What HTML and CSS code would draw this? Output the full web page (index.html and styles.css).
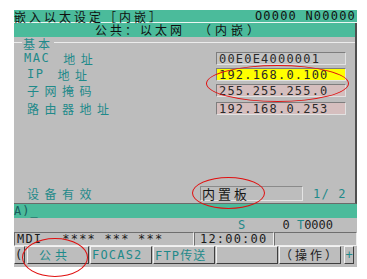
FILE: index.html
```html
<!DOCTYPE html>
<html lang="zh">
<head>
<meta charset="utf-8">
<title>嵌入以太设定</title>
<link rel="stylesheet" href="styles.css">
</head>
<body>
<div class="screen">
  <div class="title">
    <span class="cjk title-text">嵌入以太设定［内嵌］</span>
    <span class="mono">O0000 N00000</span>
  </div>
  <div class="subtitle">
    <span class="cjk sub-a">公共：以太网</span>
    <span class="cjk sub-b">（内嵌）</span>
  </div>
  <div class="panel">
    <div class="legend">
      <span class="legend-line short"></span>
      <span class="cjk legend-text">基本</span>
      <span class="legend-line long"></span>
    </div>
    <div class="rows">
      <div class="row">
        <span class="label label-mac"><span class="mono lat">MAC</span><span class="cjk lab">地址</span></span>
        <span class="value mono">00E0E4000001</span>
      </div>
      <div class="row">
        <span class="label label-ip"><span class="mono lat">IP</span><span class="cjk lab">地址</span></span>
        <span class="value mono yellow">192.168.0.100</span>
      </div>
      <div class="row">
        <span class="label"><span class="cjk lab">子网掩码</span></span>
        <span class="value mono pink">255.255.255.0</span>
      </div>
      <div class="row row-last">
        <span class="label"><span class="cjk lab">路由器地址</span></span>
        <span class="value mono pink">192.168.0.253</span>
      </div>
    </div>
    <div class="device">
      <span class="label"><span class="cjk lab">设备有效</span></span>
      <span class="dev-box cjk">内置板</span>
      <span class="page mono">1/ 2</span>
    </div>
  </div>
  <div class="input mono">A)_</div>
  <div class="srow mono">
    <span class="teal">S</span>
    <span class="st"><span>0</span> <span class="teal">T</span><span>0000</span></span>
  </div>
  <div class="status">
    <div class="cell cell-a mono"><span class="mdi">MDI</span><span>**** *** ***</span></div>
    <div class="cell cell-b mono">12:00:00</div>
    <div class="cell cell-c"></div>
  </div>
  <div class="keys">
    <div class="key key-edge mono">(</div>
    <div class="key key-w cjk key-center teal">公共</div>
    <div class="key key-w mono teal">FOCAS2</div>
    <div class="key key-w teal"><span class="mono">FTP</span><span class="cjk">传送</span></div>
    <div class="key key-w"></div>
    <div class="key key-w cjk key-op">（操作）</div>
    <div class="key key-plus mono teal">+</div>
  </div>
  <div class="mark mark-ip"></div>
  <div class="mark mark-dev"></div>
  <div class="mark mark-key"></div>
</div>
</body>
</html>
```
FILE: styles.css
```css
* { box-sizing: border-box; }
html, body { margin: 0; padding: 0; background: #ffffff; }
body { width: 367px; height: 279px; overflow: hidden; }

.cjk { font-family: "Noto Sans CJK SC", "Noto Sans", sans-serif; font-size: 12px; }
.mono { font-family: "DejaVu Sans Mono", "Liberation Mono", monospace; font-size: 12px; letter-spacing: 1.2px; }
.teal { color: #1f8a8a; }

.screen {
  position: relative;
  margin: 10px 0 0 14px;
  width: 343px;
  background: #bdbdbd;
  padding-bottom: 3px;
}

.title {
  height: 13px;
  background: #4bbb9b;
  display: flex;
  justify-content: space-between;
  align-items: center;
  color: #101010;
  line-height: 13px;
  border-bottom: 1px solid #eaf6f2;
  padding-right: 1px;
}
.title-text { letter-spacing: 3px; }

.subtitle {
  height: 14px;
  background: #4bbb9b;
  display: flex;
  align-items: center;
  line-height: 14px;
  color: #101010;
  padding-left: 81px;
  border-right: 2px solid #4f4f4f;
}
.sub-a { letter-spacing: 3px; }
.sub-b { letter-spacing: 4px; margin-left: 14px; }

.panel {
  height: 167px;
  display: flex;
  flex-direction: column;
  border-right: 2px solid #4f4f4f;
  border-bottom: 1px solid #6a6a6a;
}

.legend {
  display: flex;
  height: 14px;
  margin-top: 1px;
}
.legend-line { height: 1px; background: #ececec; margin-top: 4px; }
.legend-line.short { width: 8px; }
.legend-line.long { flex: 1; }
.legend-text { color: #1f8a8a; line-height: 12px; letter-spacing: 3px; padding: 0 1px; }

.rows { display: flex; flex-direction: column; gap: 3px; }
.row { display: flex; height: 13px; align-items: center; }
.row-last { margin-top: 2px; }

.label {
  width: 202px;
  padding-left: 13px;
  color: #1f8a8a;
  display: flex;
  align-items: center;
  line-height: 13px;
}
.label-mac { padding-left: 10px; }
.lab { letter-spacing: 5.5px; }
.label-mac .lat { letter-spacing: 1.5px; margin-right: 13px; }
.label-ip .lat { letter-spacing: 1.5px; margin-right: 13px; }

.value {
  width: 130px;
  height: 13px;
  line-height: 12px;
  padding-left: 2px;
  color: #2a2a2a;
  background: #c3c3c3;
  border: 1px solid;
  border-color: #7e7e7e #e2e2e2 #e2e2e2 #7e7e7e;
}
.value.yellow { background: #ffff00; }
.value.pink { background: #d5bebe; }

.device {
  margin-top: auto;
  margin-bottom: 2px;
  display: flex;
  align-items: center;
  height: 15px;
}
.device .label { width: 186px; }
.dev-box {
  width: 103px;
  height: 15px;
  line-height: 13px;
  padding-left: 1px;
  color: #151515;
  font-size: 13px;
  letter-spacing: 3px;
  border: 1px solid;
  border-color: #8a8a8a #e4e4e4 #e4e4e4 #8a8a8a;
}
.page { margin-left: 10px; color: #1f8a8a; }

.input {
  height: 14px;
  line-height: 14px;
  background: #4bbb9b;
  color: #1a5c5c;
  letter-spacing: 1px;
}

.srow {
  height: 14px;
  line-height: 14px;
  padding-left: 224px;
  display: flex;
  color: #222222;
}
.st { margin-left: 36px; white-space: pre; letter-spacing: 0; }

.status { display: flex; height: 14px; }
.cell {
  height: 14px;
  line-height: 12px;
  border: 1px solid;
  border-color: #6e6e6e #eeeeee #eeeeee #6e6e6e;
  color: #1a1a1a;
  white-space: pre;
}
.cell-a { width: 180px; padding-left: 2px; }
.mdi { margin-right: 20px; }
.cell-b { width: 80px; padding-left: 5px; }
.cell-c { flex: 1; }

.keys { display: flex; height: 18px; gap: 1px; }
.key {
  height: 18px;
  line-height: 16px;
  border: 1px solid;
  border-color: #f2f2f2 #3e3e3e #3e3e3e #f2f2f2;
  white-space: nowrap;
  overflow: hidden;
  padding-left: 1px;
}
.key-edge { width: 11px; margin-right: 1px; color: #202020; padding-left: 0; }
.key-w { width: 62px; }
.key-center { text-align: center; letter-spacing: 4px; padding-left: 0; padding-right: 6px; }
.key-plus { width: 10px; margin-left: 2px; padding-left: 0; text-align: center; letter-spacing: 0; }
.key .cjk { letter-spacing: 1px; }
.key-op { color: #202020; letter-spacing: 3px; padding-left: 0; }

.mark {
  position: absolute;
  border: 1px solid #e01010;
  border-radius: 50%;
  pointer-events: none;
}
.mark-ip { left: 192px; top: 55px; width: 143px; height: 37px; }
.mark-dev { left: 178px; top: 167px; width: 73px; height: 32px; }
.mark-key { left: 8px; top: 228px; width: 66px; height: 39px; }
```
